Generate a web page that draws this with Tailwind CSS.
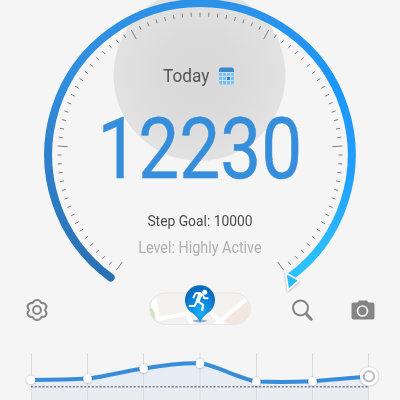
<!DOCTYPE html>
<html lang="en">
<head>
<meta charset="utf-8">
<title>Pedometer</title>
<script src="https://cdn.jsdelivr.net/npm/@tailwindcss/browser@4"></script>
</head>
<body class="bg-[#f5f5f5] font-[Roboto,sans-serif]">
<main class="relative flex h-[400px] w-[400px] flex-col overflow-hidden bg-[#f5f5f5]">
  <!-- Gauge -->
  <section class="relative h-[283px] shrink-0">
    <svg class="absolute inset-0 overflow-visible" width="400" height="300" viewBox="0 0 400 300" fill="none">
      <defs>
        <radialGradient id="disc" cx=".5" cy=".5" r=".5"><stop offset="0" stop-color="#d9d9d9"/><stop offset=".5" stop-color="#dbdbdb"/><stop offset="1" stop-color="#e2e2e2"/></radialGradient>
        <linearGradient id="la" gradientUnits="userSpaceOnUse" x1="0" y1="280" x2="0" y2="0"><stop offset="0" stop-color="#2a71b3"/><stop offset=".45" stop-color="#2f80cb"/><stop offset=".75" stop-color="#318fe1"/><stop offset="1" stop-color="#2c92e8"/></linearGradient>
        <linearGradient id="ra" gradientUnits="userSpaceOnUse" x1="0" y1="280" x2="0" y2="0"><stop offset="0" stop-color="#2bc5ff"/><stop offset=".15" stop-color="#2ab8fd"/><stop offset=".38" stop-color="#219efd"/><stop offset=".7" stop-color="#1b97fa"/><stop offset="1" stop-color="#2c92e8"/></linearGradient>
        <filter id="sh" x="-50%" y="-50%" width="200%" height="200%"><feDropShadow dx="0" dy="1" stdDeviation="1.3" flood-opacity=".35"/></filter>
      </defs>
      <circle cx="199.500" cy="75" r="86" fill="url(#disc)"/>
      <g id="ticks" stroke="#777" stroke-width=".95"></g>
      <path d="M110.700 277.500A151.700 151.700 0 0 1 200 3.100" stroke="url(#la)" stroke-width="8" stroke-linecap="round"/>
      <path d="M200 3.100A151.700 151.700 0 0 1 289.200 277.500" stroke="url(#ra)" stroke-width="8"/>
      <path d="M285.800 273L299 280.300L288.300 289.700Z" fill="#2bbcf7" stroke="#fff" stroke-width="1.500" filter="url(#sh)"/>
    </svg>
    <div class="relative flex flex-col items-center pt-[64px]">
      <div class="flex h-6 items-center gap-[8px] pr-1">
        <span class="origin-right scale-x-[.96] text-[18px] leading-6 text-[#555]">Today</span>
        <svg width="17" height="18" viewBox="0 0 17 18"><path d="M1 5V3Q1 .5 3.500 .5H13.500Q16 .5 16 3V5Z" fill="#3988d2"/><path d="M1 6H16V15Q16 17.500 13.500 17.500H3.500Q1 17.500 1 15Z" fill="#77bff5"/><path d="M1 9.300H16M1 13.500H16M4.500 6V17.500M8.500 6V17.500M12.500 6V17.500" stroke="#d9e5ef" stroke-width=".8"/><path d="M9 10H12V13H9Z" fill="#367fc4"/></svg>
      </div>
      <div class="mt-[20px] flex h-[84px] scale-x-[.862] items-center text-[84.500px] leading-[84px] text-[#368edb] [-webkit-text-stroke:.5px_#368edb]">12230</div>
      <div class="mt-[19px] h-5 scale-x-[.923] text-[15px] leading-5 text-[#4c4c4c]">Step Goal: 10000</div>
      <div class="mt-[7px] h-5 scale-x-[.87] text-[16.500px] leading-5 text-[#b0b0b0]">Level: Highly Active</div>
    </div>
  </section>
  <!-- Toolbar -->
  <nav class="relative flex h-[54px] shrink-0 items-center justify-between pr-[25px] pl-[26px]">
    <svg width="22" height="24" viewBox="0 0 22 24" fill="none" stroke="#858585" stroke-width="2"><path d="M7.700 3.500Q8.600 2 11 2T14.300 3.500Q15.300 5.600 17.500 5.100Q19.300 5.600 20.200 7.500Q21 9.200 19.700 10.500Q18.500 12 19.700 13.500Q21 14.800 20.200 16.500Q19.300 18.400 17.500 18.900Q15.300 18.400 14.300 20.500Q13.400 22 11 22T7.700 20.500Q6.700 18.400 4.500 18.900Q2.700 18.400 1.800 16.500Q1 14.800 2.300 13.500Q3.500 12 2.300 10.500Q1 9.200 1.800 7.500Q2.700 5.600 4.500 5.100Q6.700 5.600 7.700 3.500Z"/><circle cx="11" cy="12" r="3.900"/></svg>
    <svg class="absolute top-0 left-[144px]" width="112" height="48" viewBox="144 283 112 48" fill="none">
      <defs><clipPath id="pill"><rect x="149.500" y="293" width="101" height="31.500" rx="15.750"/></clipPath>
      <radialGradient id="pin" cx=".5" cy=".72" r=".65"><stop offset="0" stop-color="#1fb0f3"/><stop offset=".55" stop-color="#0b87dc"/><stop offset="1" stop-color="#066abd"/></radialGradient></defs>
      <rect x="149.500" y="293" width="101" height="31.500" rx="15.750" fill="#f3f2f1"/>
      <g clip-path="url(#pill)">
        <path d="M148 309L154 308L156 325H148Z" fill="#d3e3c3"/><path d="M251 296L223 318L231 326H252Z" fill="#f3e6df"/>
        <path d="M149 301H155L158 319L190 313M151 296L155 310M186 312L193 326M210 311L225 327M214 326L248 298" stroke="#fff" stroke-width="4.200"/>
      </g>
      <rect x="149.500" y="293" width="101" height="31.500" rx="15.750" stroke="#e8e7e6"/>
      <ellipse cx="200" cy="321" rx="7" ry="1.500" fill="#2b6ea8" opacity=".5"/>
      <path d="M200 322.500Q198 317 191.500 312.500A15 15 0 1 1 208.500 312.500Q202 317 200 322.500Z" fill="url(#pin)"/>
      <circle cx="204.700" cy="292.300" r="2.500" fill="#fff"/>
      <path d="M193.500 297.500L195.500 293.300L200 293L203 295.300L204.300 298.200L207.600 298.200" stroke="#fff" stroke-width="1.900" stroke-linecap="round" stroke-linejoin="round"/>
      <path d="M200.300 294.500L197.700 300.800" stroke="#fff" stroke-width="4" stroke-linecap="round"/>
      <path d="M198.300 301.500L203 304.800L202.300 310M197 301.500L194.500 306L189.800 306" stroke="#fff" stroke-width="2.100" stroke-linecap="round" stroke-linejoin="round"/>
    </svg>
    <div class="flex items-center gap-[37px]">
      <svg width="23" height="23" viewBox="0 0 23 23" fill="none" stroke="#858585"><circle cx="9.500" cy="9" r="7.500" stroke-width="2"/><path d="M15 14.700L20.200 20.200" stroke-width="3" stroke-linecap="round"/></svg>
      <svg width="24" height="20" viewBox="0 0 24 20"><path d="M2.700 2.500H6.500L8 .4H16L17.500 2.500H21.300Q23.500 2.500 23.500 4.500V17.500Q23.500 19.500 21.300 19.500H2.700Q.5 19.500 .5 17.500V4.500Q.5 2.500 2.700 2.500Z" fill="#858585"/><circle cx="11.500" cy="11" r="5" fill="none" stroke="#f5f5f5" stroke-width="1.700"/></svg>
    </div>
  </nav>
  <!-- Weekly chart -->
  <svg class="shrink-0" width="400" height="63" viewBox="0 337 400 63" fill="none">
    <defs><linearGradient id="area" x1="0" y1="0" x2="0" y2="1"><stop offset="0" stop-color="#e5edf5"/><stop offset="1" stop-color="#e9edf2"/></linearGradient>
    <filter id="dot" x="-60%" y="-60%" width="220%" height="220%"><feDropShadow dx="0" dy=".3" stdDeviation="1.300" flood-opacity=".35"/></filter></defs>
    <path d="M31 380Q68 379.500 87.500 378.500C100 378 125 371 143.500 368.500Q180 362.500 200 363.300C214 364.500 240 379 256.500 381.500Q285 382.500 312.500 381.200L368.500 376.500V400H31Z" fill="url(#area)"/>
    <path d="M31.500 353V400M87.500 353V400M143.500 353V400M200 353V400M256.500 353V400M312.500 353V400M368.500 353V400" stroke="#dadbdd"/>
    <path d="M31 386.800H369" stroke="#7b838f" stroke-width="1.500" stroke-dasharray="2.200 1.600"/>
    <path d="M31 380Q68 379.500 87.500 378.500C100 378 125 371 143.500 368.500Q180 362.500 200 363.300C214 364.500 240 379 256.500 381.500Q285 382.500 312.500 381.200L368.500 376.500" stroke="#398dd8" stroke-width="4"/>
    <g fill="#fff" filter="url(#dot)"><circle cx="31" cy="380" r="4.300"/><circle cx="87.500" cy="378.500" r="4.300"/><circle cx="143.700" cy="368.500" r="4.300"/><circle cx="200" cy="363.500" r="4.300"/><circle cx="256.300" cy="381.700" r="4.300"/><circle cx="312.500" cy="381.300" r="4.300"/></g>
    <circle cx="369" cy="376.300" r="7.700" stroke="#fff" stroke-width="2.800" filter="url(#dot)"/>
    <circle cx="369" cy="376.300" r="5" fill="#fff" stroke="#bdbdbd" stroke-width="1.800"/>
  </svg>
</main>
<script>
  const ticks = document.getElementById('ticks');
  for (let i = 0; i <= 80; i++) {
    const a = (i * 3.6 - 144) * Math.PI / 180, r = i % 16 ? 138.5 : 132.5;
    const l = document.createElementNS('http://www.w3.org/2000/svg', 'line');
    l.setAttribute('x1', 200 + r * Math.sin(a)); l.setAttribute('y1', 155 - r * Math.cos(a));
    l.setAttribute('x2', 200 + 142.5 * Math.sin(a)); l.setAttribute('y2', 155 - 142.5 * Math.cos(a));
    ticks.appendChild(l);
  }
</script>
</body>
</html>
